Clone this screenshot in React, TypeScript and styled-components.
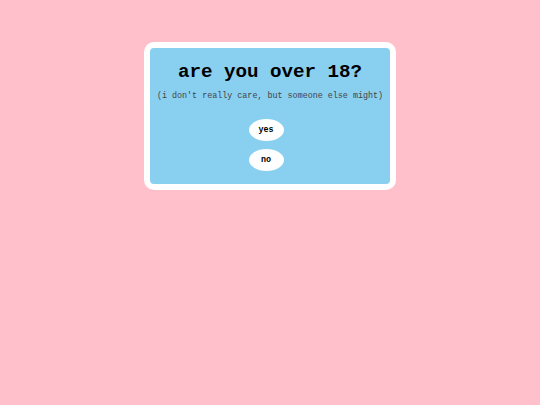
import React from 'react';
import styled, { createGlobalStyle } from 'styled-components';

const GlobalStyle = createGlobalStyle`
  body {
    margin: 0;
    background: #ffc0cb;
    font-family: "Liberation Mono", "Courier New", monospace;
  }
`;

const Page = styled.div`
  display: flex;
  justify-content: center;
  padding-top: 42px;
`;

const Card = styled.div`
  width: 240px;
  background: #89cff0;
  border: 6px solid #ffffff;
  border-radius: 10px;
  padding: 13px 0 13px;
  text-align: center;
`;

const Title = styled.h1`
  margin: 0;
  font-size: 19.2px;
  line-height: 22px;
  font-weight: bold;
  color: #000;
`;

const Note = styled.p`
  margin: 8px 0 0;
  font-size: 8.4px;
  line-height: 10px;
  color: #444;
`;

const Choices = styled.div`
  display: flex;
  flex-direction: column;
  align-items: center;
  gap: 8px;
  margin-top: 18px;
  padding-right: 8px;
`;

const Choice = styled.button`
  width: 35px;
  height: 22px;
  padding: 0;
  border: none;
  border-radius: 50%;
  background: #ffffff;
  color: #000;
  font-family: "Liberation Mono", "Courier New", monospace;
  font-size: 8.4px;
  font-weight: bold;
  cursor: pointer;
`;

export default function App() {
  return (
    <>
      <GlobalStyle />
      <Page>
        <Card>
          <Title>are you over 18?</Title>
          <Note>(i don't really care, but someone else might)</Note>
          <Choices>
            <Choice>yes</Choice>
            <Choice>no</Choice>
          </Choices>
        </Card>
      </Page>
    </>
  );
}
